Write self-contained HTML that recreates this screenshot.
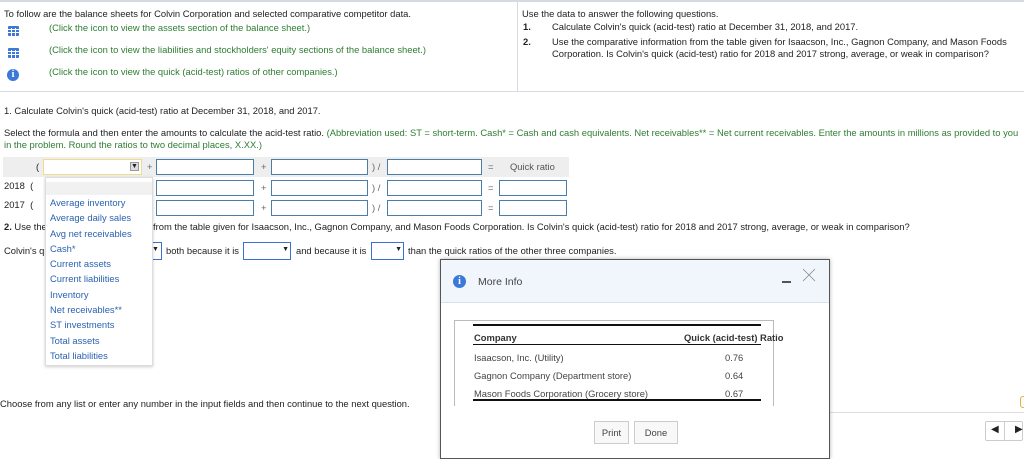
<!DOCTYPE html>
<html><head><meta charset="utf-8"><style>
*{margin:0;padding:0;box-sizing:border-box}
body{width:1024px;height:444px;overflow:hidden;background:#fff;font-family:"Liberation Sans",Arial,sans-serif;font-size:9.4px;color:#222;position:relative}
.a{position:absolute;white-space:nowrap}
.g{color:#2e7d32}
.in{position:absolute;height:16px;border:1px solid #4a7ea8;background:#fff}
.ic{position:absolute;width:11px;height:10px;background:#3b78d8;border-radius:1px}
.ic i{position:absolute;background:#fff}
.blue{color:#2a62b0}
</style></head><body>
<div class="a" style="left:0;top:0;width:1024px;height:2px;background:#d6dbe2"></div>
<div class="a" style="left:517px;top:2px;width:1px;height:90px;background:#d6dbe2"></div>
<div class="a" style="left:0;top:91px;width:1024px;height:1px;background:#d6dbe2"></div>

<div class="a" style="left:4px;top:8px">To follow are the balance sheets for Colvin Corporation and selected comparative competitor data.</div>
<div class="a g" style="left:49px;top:22px">(Click the icon to view the assets section of the balance sheet.)</div>
<div class="a g" style="left:49px;top:44px">(Click the icon to view the liabilities and stockholders' equity sections of the balance sheet.)</div>
<div class="a g" style="left:49px;top:66px">(Click the icon to view the quick (acid-test) ratios of other companies.)</div>
<div class="ic" style="left:8px;top:26px"><i style="left:0;top:3px;width:11px;height:1px"></i><i style="left:0;top:6px;width:11px;height:1px"></i><i style="left:3px;top:2px;width:1px;height:8px"></i><i style="left:7px;top:2px;width:1px;height:8px"></i></div>
<div class="ic" style="left:8px;top:48px"><i style="left:0;top:3px;width:11px;height:1px"></i><i style="left:0;top:6px;width:11px;height:1px"></i><i style="left:3px;top:2px;width:1px;height:8px"></i><i style="left:7px;top:2px;width:1px;height:8px"></i></div>
<div class="a" style="left:7px;top:69px;width:12px;height:12px;border-radius:50%;background:#3b78d8;color:#fff;font:bold 10px 'Liberation Serif',serif;text-align:center;line-height:12px">i</div>

<div class="a" style="left:522px;top:8px">Use the data to answer the following questions.</div>
<div class="a" style="left:523px;top:21px;font-weight:bold">1.</div>
<div class="a" style="left:552px;top:21px">Calculate Colvin's quick (acid-test) ratio at December 31, 2018, and 2017.</div>
<div class="a" style="left:523px;top:36px;font-weight:bold">2.</div>
<div class="a" style="left:552px;top:36px;line-height:11.5px">Use the comparative information from the table given for Isaacson, Inc., Gagnon Company, and Mason Foods<br>Corporation. Is Colvin's quick (acid-test) ratio for 2018 and 2017 strong, average, or weak in comparison?</div>

<div class="a" style="left:4px;top:105px">1. Calculate Colvin's quick (acid-test) ratio at December 31, 2018, and 2017.</div>
<div class="a" style="left:4px;top:127px;line-height:11.5px">Select the formula and then enter the amounts to calculate the acid-test ratio. <span class="g">(Abbreviation used: ST = short-term. Cash* = Cash and cash equivalents. Net receivables** = Net current receivables. Enter the amounts in millions as provided to you</span><br><span class="g">in the problem. Round the ratios to two decimal places, X.XX.)</span></div>

<div class="a" style="left:3px;top:157px;width:566px;height:20px;background:#eee"></div>
<div class="a" style="left:36px;top:161px">(</div>
<div class="in" style="left:43px;top:159px;width:99px;border-color:#f0dc8c"></div>
<div class="a" style="left:130px;top:162px;width:9px;height:9px;background:#ddd;border:1px solid #999;font-size:7px;line-height:7px;text-align:center">▼</div>
<div class="a" style="left:147px;top:161px;color:#666">+</div>
<div class="a" style="left:4px;top:180px">2018 &nbsp;(</div>
<div class="a" style="left:4px;top:199px">2017 &nbsp;(</div>
<div class="in" style="left:156px;top:159px;width:98px"></div>
<div class="in" style="left:156px;top:180px;width:98px"></div>
<div class="in" style="left:156px;top:200px;width:98px"></div>
<div class="a" style="left:261px;top:161px;color:#666">+</div><div class="a" style="left:261px;top:182px;color:#666">+</div><div class="a" style="left:261px;top:202px;color:#666">+</div>
<div class="in" style="left:271px;top:159px;width:97px"></div>
<div class="in" style="left:271px;top:180px;width:97px"></div>
<div class="in" style="left:271px;top:200px;width:97px"></div>
<div class="a" style="left:372px;top:161px;color:#666">) /</div><div class="a" style="left:372px;top:182px;color:#666">) /</div><div class="a" style="left:372px;top:202px;color:#666">) /</div>
<div class="in" style="left:387px;top:159px;width:95px"></div>
<div class="in" style="left:387px;top:180px;width:95px"></div>
<div class="in" style="left:387px;top:200px;width:95px"></div>
<div class="a" style="left:488px;top:161px;color:#666">=</div><div class="a" style="left:488px;top:182px;color:#666">=</div><div class="a" style="left:488px;top:202px;color:#666">=</div>
<div class="a" style="left:510px;top:161px;color:#555">Quick ratio</div>
<div class="in" style="left:499px;top:180px;width:68px"></div>
<div class="in" style="left:499px;top:200px;width:68px"></div>

<div class="a" style="left:4px;top:221px"><b>2.</b> Use the</div>
<div class="a" style="left:153px;top:221px">from the table given for Isaacson, Inc., Gagnon Company, and Mason Foods Corporation. Is Colvin's quick (acid-test) ratio for 2018 and 2017 strong, average, or weak in comparison?</div>
<div class="a" style="left:4px;top:245px">Colvin's q</div>
<div class="a" style="left:152px;top:242px;width:10px;height:18px;border:1px solid #3b6fd0;border-left:none;font-size:7px;line-height:14px">▼</div>
<div class="a" style="left:166px;top:245px">both because it is</div>
<div class="a" style="left:243px;top:242px;width:48px;height:18px;border:1px solid #3b6fd0;font-size:7px;line-height:14px;text-align:right;padding-right:1px">▼</div>
<div class="a" style="left:296px;top:245px">and because it is</div>
<div class="a" style="left:371px;top:242px;width:33px;height:18px;border:1px solid #3b6fd0;font-size:7px;line-height:14px;text-align:right;padding-right:1px">▼</div>
<div class="a" style="left:408px;top:245px">than the quick ratios of the other three companies.</div>

<div class="a" style="left:45px;top:177px;width:108px;height:189px;background:#fff;border:1px solid #ddd;box-shadow:0 1px 3px rgba(0,0,0,.2)"></div>
<div class="a" style="left:46px;top:182px;width:106px;height:13px;background:#f1f1f1"></div>
<div class="a blue" style="left:50px;top:195px;line-height:15.3px">Average inventory<br>Average daily sales<br>Avg net receivables<br>Cash*<br>Current assets<br>Current liabilities<br>Inventory<br>Net receivables**<br>ST investments<br>Total assets<br>Total liabilities</div>

<div class="a" style="left:0;top:398px">Choose from any list or enter any number in the input fields and then continue to the next question.</div>
<div class="a" style="left:829px;top:412px;width:195px;height:1px;background:#ddd"></div>
<div class="a" style="left:1020px;top:396px;width:6px;height:12px;border:1px solid #e0b040;border-radius:3px"></div>
<div class="a" style="left:985px;top:421px;width:38px;height:20px;border:1px solid #ccc;border-radius:2px"></div>
<div class="a" style="left:1004px;top:421px;width:1px;height:20px;background:#ccc"></div>
<div class="a" style="left:991px;top:424px;font-size:10px">◀</div>
<div class="a" style="left:1015px;top:424px;font-size:10px">▶</div>

<div class="a" style="left:440px;top:259px;width:390px;height:200px;background:#fff;border:1px solid #555;box-shadow:0 0 4px rgba(0,0,0,.3)"></div>
<div class="a" style="left:441px;top:260px;width:388px;height:43px;background:#f1f5fc;border-bottom:1px solid #d6e0ee"></div>
<div class="a" style="left:453px;top:275px;width:13px;height:13px;border-radius:50%;background:#3b78d8;color:#fff;font:bold 10px 'Liberation Serif',serif;text-align:center;line-height:13px">i</div>
<div class="a" style="left:478px;top:276px;font-size:10.5px;color:#444">More Info</div>
<div class="a" style="left:782px;top:281px;width:9px;height:2px;background:#555"></div>
<svg class="a" style="left:802px;top:268px" width="14" height="14"><path d="M1 1L13 13M13 1L1 13" stroke="#888" stroke-width="0.8"/></svg>
<div class="a" style="left:454px;top:320px;width:320px;height:86px;border:1px solid #bbb;border-bottom:none"></div>
<div class="a" style="left:473px;top:324px;width:288px;height:2px;background:#111"></div>
<div class="a" style="left:474px;top:332px;font-weight:bold;color:#333">Company</div>
<div class="a" style="left:684px;top:332px;font-weight:bold;color:#333">Quick (acid-test) Ratio</div>
<div class="a" style="left:473px;top:344px;width:288px;height:1px;background:#111"></div>
<div class="a" style="left:474px;top:349px;color:#444;line-height:18px">Isaacson, Inc. (Utility)<br>Gagnon Company (Department store)<br>Mason Foods Corporation (Grocery store)</div>
<div class="a" style="left:725px;top:349px;color:#444;line-height:18px">0.76<br>0.64<br>0.67</div>
<div class="a" style="left:473px;top:399px;width:288px;height:2px;background:#111"></div>
<div class="a" style="left:594px;top:421px;width:35px;height:23px;border:1px solid #ccc;background:#f8f8f8;text-align:center;line-height:21px;color:#444">Print</div>
<div class="a" style="left:634px;top:421px;width:44px;height:23px;border:1px solid #ccc;background:#f8f8f8;text-align:center;line-height:21px;color:#444">Done</div>
</body></html>
